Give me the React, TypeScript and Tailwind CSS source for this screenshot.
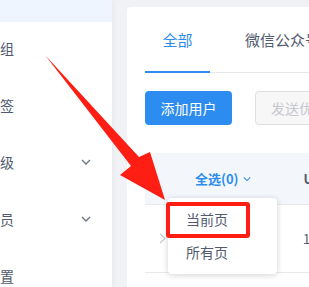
import React from 'react';

const Chevron = ({ className }: { className?: string }) => (
  <svg width="10" height="6" viewBox="0 0 10 6" className={className} fill="none">
    <polyline points="1,1 5,5 9,1" stroke="currentColor" strokeWidth="1.3" />
  </svg>
);

const sideItems = [
  { label: '组', arrow: false },
  { label: '签', arrow: false },
  { label: '级', arrow: true },
  { label: '员', arrow: true },
  { label: '置', arrow: false },
];

export default function App() {
  return (
    <div className="relative flex w-[309px] h-[287px] overflow-hidden bg-[#f0f2f5] font-['Noto_Sans_CJK_SC',sans-serif]">
      {/* Sidebar */}
      <aside className="w-[112px] shrink-0 bg-white shadow-[2px_0_5px_rgba(0,0,0,0.04)]">
        <div className="h-[22px] bg-[#eef5fe]" />
        {sideItems.map((item) => (
          <div key={item.label} className="h-[57px] pb-[5px] flex items-center justify-between pr-[21px] text-[14px] text-[#515a6e]">
            <span>{item.label}</span>
            {item.arrow && <Chevron className="text-[#6b7280]" />}
          </div>
        ))}
      </aside>

      {/* Main */}
      <main className="flex-1 min-w-0 pl-[15px] pt-[7px]">
        <div className="w-[420px] h-full bg-white rounded-tl-[4px] pl-[18px] pt-[14px]">
          {/* Tabs */}
          <div className="flex border-b border-[#e4e6ea] text-[15px]">
            <div className="relative w-[65px] text-center leading-[38px] pb-[13px] text-[#2d8cf0]">
              全部
              <span className="absolute left-0 right-0 -bottom-[1px] h-[2px] bg-[#2d8cf0]" />
            </div>
            <div className="pl-[35px] leading-[38px] pb-[13px] text-[#515a6e]">微信公众号</div>
          </div>

          {/* Buttons */}
          <div className="mt-[18px] flex">
            <button className="w-[87px] h-[34px] rounded-[4px] bg-[#2d8cf0] text-white text-[14px]">添加用户</button>
            <button className="ml-[23px] h-[34px] px-[15px] rounded-[4px] border border-[#dcdee2] bg-[#f7f7f7] text-[#c5c8ce] text-[14px]">发送优惠券</button>
          </div>

          {/* Table */}
          <div className="relative mt-[28px]">
            <div className="h-[52px] flex items-center bg-[#f3f7fc] border-b border-[#e8eaec] text-[13px]">
              <div className="ml-[50px] flex items-center gap-[4px] text-[#2d8cf0] font-bold">
                全选(0)
                <Chevron className="text-[#2d8cf0] w-[8px]" />
              </div>
              <div className="ml-[53px] font-bold text-[#515a6e]">UID</div>
            </div>
            <div className="h-[68px] flex items-center border-b border-[#e8eaec] text-[13px] text-[#515a6e]">
              <svg width="7" height="11" viewBox="0 0 7 11" className="ml-[14px]" fill="none">
                <polyline points="1,1 6,5.5 1,10" stroke="#c5c8ce" strokeWidth="1.2" />
              </svg>
              <span className="ml-[137px]">1</span>
            </div>

            {/* Dropdown */}
            <div className="absolute left-[23px] top-[45px] w-[109px] py-[5px] bg-white rounded-[4px] shadow-[0_1px_6px_rgba(0,0,0,0.18)] text-[14px] text-[#515a6e]">
              <div className="h-[33px] pl-[18px] flex items-center">当前页</div>
              <div className="h-[33px] pl-[18px] flex items-center">所有页</div>
              <div className="absolute left-[-2px] top-[4px] w-[84px] h-[36px] border-[4px] border-[#fe1e14] rounded-[3px]" />
            </div>
          </div>
        </div>
      </main>

      {/* Annotation arrow */}
      <svg className="absolute inset-0 pointer-events-none" width="309" height="287" viewBox="0 0 309 287">
        <polygon points="45,55 139,157 150,152 165,200 120,175 131,166" fill="#fe1e14" />
      </svg>
    </div>
  );
}
